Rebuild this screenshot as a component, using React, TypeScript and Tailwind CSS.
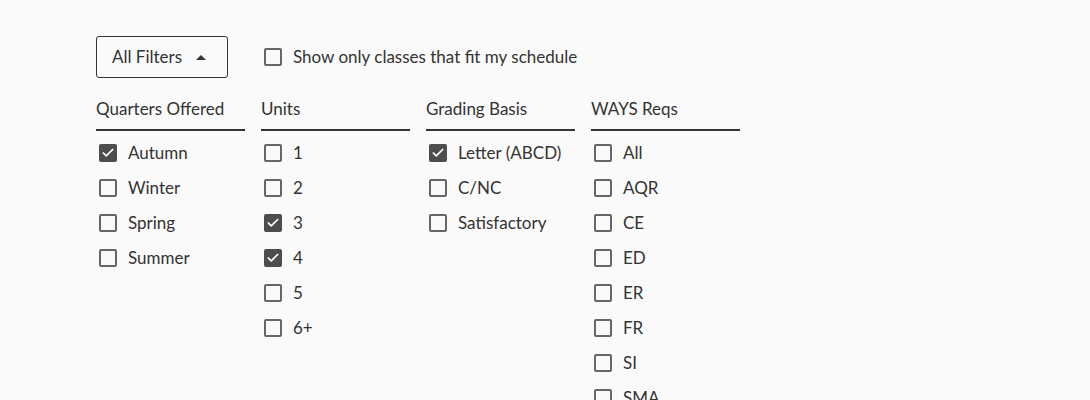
import { Check } from 'lucide-react'

type Option = { label: string; checked?: boolean }

const groups: { title: string; options: Option[] }[] = [
  {
    title: 'Quarters Offered',
    options: [
      { label: 'Autumn', checked: true },
      { label: 'Winter' },
      { label: 'Spring' },
      { label: 'Summer' },
    ],
  },
  {
    title: 'Units',
    options: [
      { label: '1' },
      { label: '2' },
      { label: '3', checked: true },
      { label: '4', checked: true },
      { label: '5' },
      { label: '6+' },
    ],
  },
  {
    title: 'Grading Basis',
    options: [
      { label: 'Letter (ABCD)', checked: true },
      { label: 'C/NC' },
      { label: 'Satisfactory' },
    ],
  },
  {
    title: 'WAYS Reqs',
    options: [
      { label: 'All' },
      { label: 'AQR' },
      { label: 'CE' },
      { label: 'ED' },
      { label: 'ER' },
      { label: 'FR' },
      { label: 'SI' },
      { label: 'SMA' },
    ],
  },
]

function Box({ checked }: { checked?: boolean }) {
  return checked ? (
    <span className="flex h-[18px] w-[18px] shrink-0 items-center justify-center rounded-[2px] bg-[#4d4d4d]">
      <Check size={14} strokeWidth={3} className="text-white" />
    </span>
  ) : (
    <span className="h-[18px] w-[18px] shrink-0 rounded-[2px] border-2 border-[#666]" />
  )
}

export default function App() {
  return (
    <div className="min-h-[400px] bg-[#fafafa] pl-[96px] pt-[36px] font-['Lato','Noto_Sans',sans-serif] text-[17px] text-[#333]">
      <div className="flex items-center">
        <button className="flex h-[42px] w-[132px] items-center rounded-[3px] border border-[#333] pl-[15px]">
          All Filters
          <span className="ml-[14px] h-0 w-0 border-x-[5px] border-b-[5px] border-x-transparent border-b-[#333]" />
        </button>
        <label className="ml-[36px] flex items-center gap-[11px]">
          <Box />
          Show only classes that fit my schedule
        </label>
      </div>

      <div className="mt-[18px] flex gap-[16px]">
        {groups.map((g) => (
          <div key={g.title} className="w-[149px]">
            <div className="h-[35px] border-b-2 border-[#333] pt-[1px] leading-[24px]">
              {g.title}
            </div>
            <ul className="pt-[4px]">
              {g.options.map((o) => (
                <li key={o.label} className="flex h-[35px] items-center gap-[11px] pl-[3px]">
                  <Box checked={o.checked} />
                  {o.label}
                </li>
              ))}
            </ul>
          </div>
        ))}
      </div>
    </div>
  )
}
